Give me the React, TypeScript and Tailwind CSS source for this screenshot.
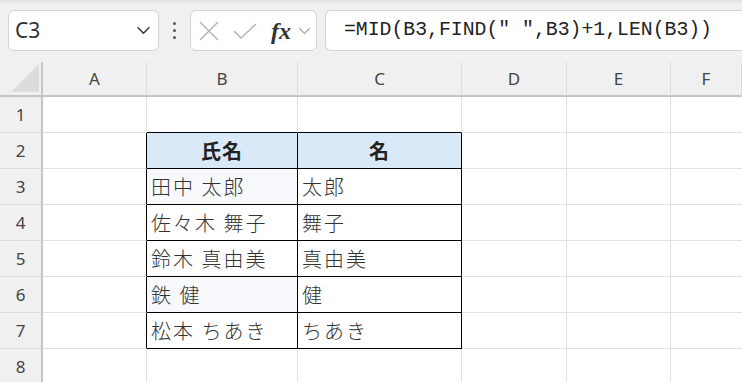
import React from 'react'

const cols = ['A', 'B', 'C', 'D', 'E', 'F']

const names: [string, string][] = [
  ['田中 太郎', '太郎'],
  ['佐々木 舞子', '舞子'],
  ['鈴木 真由美', '真由美'],
  ['鉄 健', '健'],
  ['松本 ちあき', 'ちあき'],
]

const ui = { fontFamily: '"Noto Sans", "Liberation Sans", sans-serif' }
const jp = { fontFamily: '"Noto Sans CJK JP", "Noto Sans", sans-serif' }

function Chevron({ className }: { className?: string }) {
  return (
    <svg viewBox="0 0 16 10" className={className} fill="none" stroke="currentColor" strokeWidth="1.6">
      <path d="M1.5 1.5 L8 8 L14.5 1.5" />
    </svg>
  )
}

function Toolbar() {
  return (
    <div className="h-[62px] bg-[#f0f0f0]">
      <div className="h-[3px] bg-gradient-to-b from-[#e0e0e0] to-[#ececec]" />
      <div className="flex items-center pt-[7px] pl-[8px]">
        {/* Name box */}
        <div className="flex h-[41px] w-[151px] shrink-0 items-center justify-between rounded-[6px] border border-[#d4d4d4] bg-white pl-[6px] pr-[7px]">
          <span className="text-[21px] leading-none text-[#333]" style={ui}>C3</span>
          <Chevron className="h-[9px] w-[15px] text-[#333]" />
        </div>
        {/* Dots */}
        <div className="flex w-[31px] shrink-0 flex-col items-center gap-[4px]">
          <span className="h-[3px] w-[3px] rounded-full bg-[#555]" />
          <span className="h-[3px] w-[3px] rounded-full bg-[#555]" />
          <span className="h-[3px] w-[3px] rounded-full bg-[#555]" />
        </div>
        {/* Cancel / enter / fx */}
        <div className="flex h-[41px] w-[127px] shrink-0 items-center rounded-[6px] border border-[#d4d4d4] bg-white pl-[8px]">
          <svg viewBox="0 0 20 20" className="h-[20px] w-[20px]" fill="none" stroke="#b4b4b4" strokeWidth="1.5">
            <path d="M1 1 L19 19 M19 1 L1 19" />
          </svg>
          <svg viewBox="0 0 24 16" className="ml-[14px] h-[16px] w-[24px]" fill="none" stroke="#b4b4b4" strokeWidth="1.5">
            <path d="M1 8 L8 15 L23 1" />
          </svg>
          <span
            className="ml-[14px] text-[24px] italic font-semibold leading-none text-[#333]"
            style={{ fontFamily: '"Liberation Serif", serif' }}
          >
            fx
          </span>
          <Chevron className="ml-[7px] h-[8px] w-[13px] text-[#aaa]" />
        </div>
        {/* Formula */}
        <div className="ml-[8px] flex h-[41px] w-[430px] shrink-0 items-center rounded-l-[6px] border border-r-0 border-[#d4d4d4] bg-white pl-[18px]">
          <span
            className="whitespace-pre text-[19.8px] leading-none text-[#222]"
            style={{ fontFamily: '"Liberation Mono", monospace' }}
          >
            =MID(B3,FIND(" ",B3)+1,LEN(B3))
          </span>
        </div>
      </div>
    </div>
  )
}

function Sheet() {
  const rows = [1, 2, 3, 4, 5, 6, 7, 8]
  return (
    <div className="grid grid-cols-[43px_104px_151px_164px_105px_104px_1fr] grid-rows-[35px_repeat(8,36px)] bg-white">
      {/* Corner */}
      <div className="flex items-end justify-end border-r-2 border-b-2 border-r-[#c4c4c4] border-b-[#c4c4c4] bg-[#f0f0f0] pb-[3px] pr-[2px]">
        <svg viewBox="0 0 28 28" className="h-[28px] w-[28px]">
          <path d="M28 0 L28 28 L0 28 Z" fill="#dcdcdc" />
        </svg>
      </div>
      {cols.map((c) => (
        <div
          key={c}
          className="flex items-center justify-center border-r border-b-2 border-r-[#dcdcdc] border-b-[#c4c4c4] bg-[#f0f0f0] text-[17px] text-[#444]"
          style={ui}
        >
          {c}
        </div>
      ))}
      {rows.map((r) => {
        const inTable = r >= 2 && r <= 7
        const item = r >= 3 && r <= 7 ? names[r - 3] : null
        return (
          <React.Fragment key={r}>
            <div
              className="flex items-center justify-center border-r-2 border-b border-r-[#c4c4c4] border-b-[#dcdcdc] bg-[#f0f0f0] text-[17px] text-[#444]"
              style={ui}
            >
              {r}
            </div>
            {/* A */}
            <div className={`border-b border-r border-b-[#e1e1e1] ${inTable ? 'border-r-black' : 'border-r-[#e1e1e1]'}`} />
            {/* B */}
            <div
              className={`flex items-center leading-none ${
                inTable ? 'border-r border-b border-black' : 'border-r border-b border-r-[#e1e1e1] ' + (r === 1 ? 'border-b-black' : 'border-b-[#e1e1e1]')
              } ${r === 2 ? 'justify-center bg-[#dae9f8] text-[20px] tracking-[1px] font-bold text-[#222]' : 'pl-[4px] text-[20px] tracking-[2px] font-light text-[#333]'} ${
                r === 3 || r === 6 ? 'bg-[#f7f9fc]' : ''
              }`}
              style={jp}
            >
              {r === 2 ? '氏名' : item ? item[0] : ''}
            </div>
            {/* C */}
            <div
              className={`flex items-center leading-none ${
                inTable ? 'border-r border-b border-black' : 'border-r border-b border-r-[#e1e1e1] ' + (r === 1 ? 'border-b-black' : 'border-b-[#e1e1e1]')
              } ${r === 2 ? 'justify-center bg-[#dae9f8] text-[20px] tracking-[1px] font-bold text-[#222]' : 'pl-[4px] text-[20px] tracking-[2px] font-light text-[#333]'}`}
              style={jp}
            >
              {r === 2 ? '名' : item ? item[1] : ''}
            </div>
            <div className="border-r border-b border-[#e1e1e1]" />
            <div className="border-r border-b border-[#e1e1e1]" />
            <div className="border-b border-[#e1e1e1]" />
          </React.Fragment>
        )
      })}
    </div>
  )
}

export default function App() {
  return (
    <div className="h-[382px] w-[742px] overflow-hidden bg-white">
      <Toolbar />
      <Sheet />
    </div>
  )
}
